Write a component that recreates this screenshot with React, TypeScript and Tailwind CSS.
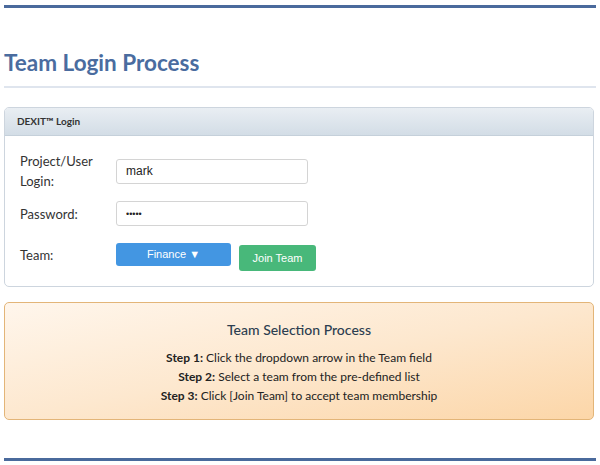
const LABEL = "text-[13px] text-[#333]";

const Field = ({ label, children }: { label: React.ReactNode; children: React.ReactNode }) => (
  <div className="flex items-center">
    <div className={`w-[96px] leading-[20px] ${LABEL}`}>{label}</div>
    {children}
  </div>
);

const App = () => {
  return (
    <div className="w-[600px] h-[465px] bg-white px-[4px] pt-[5px] font-['Lato',sans-serif] overflow-hidden">
      <div className="h-[3px] bg-[#4a6a9c]" />

      <h1 className="mt-[40px] text-[22.5px] leading-[30px] font-bold text-[#4a6c9f]">
        Team Login Process
      </h1>
      <div className="mt-[8px] h-[2px] bg-[#dfe5ee]" />

      <div className="mt-[19px] mr-[2px] rounded-[5px] border border-[#cdd5de] overflow-hidden">
        <div className="h-[28px] flex items-center px-[12px] bg-gradient-to-b from-[#e9eef3] to-[#d3dde6] border-b border-[#c5d0da] text-[10px] font-bold text-[#333]">
          DEXIT™ Login
        </div>
        <div className="px-[15px] pt-[15px] pb-[15px] flex flex-col gap-[10px]">
          <Field label={<>Project/User<br />Login:</>}>
            <input
              readOnly
              value="mark"
              className="w-[192px] h-[25px] rounded-[3px] border border-[#d4d4d4] px-[9px] text-[12px] text-[#222] font-['Liberation_Sans',sans-serif] outline-none"
            />
          </Field>
          <Field label="Password:">
            <input
              readOnly
              type="password"
              value="mark1"
              className="w-[192px] h-[25px] rounded-[3px] border border-[#d4d4d4] px-[9px] text-[9px] text-[#222] font-['Liberation_Sans',sans-serif] outline-none"
            />
          </Field>
          <div className="mt-[7px] flex items-start">
            <div className={`w-[96px] pt-[2px] leading-[20px] ${LABEL}`}>Team:</div>
            <button className="w-[115px] h-[23px] rounded-[3px] bg-[#4396e2] text-white text-[11px] font-['Liberation_Sans',sans-serif]">
              Finance ▼
            </button>
            <button className="ml-[8px] mt-[2px] w-[77px] h-[26px] rounded-[3px] bg-[#48b87a] text-white text-[11px] font-['Liberation_Sans',sans-serif]">
              Join Team
            </button>
          </div>
        </div>
      </div>

      <div className="mt-[15px] mr-[2px] h-[118px] rounded-[5px] border border-[#e3b578] bg-gradient-to-br from-[#fff6ec] via-[#fde8cf] to-[#fcd6a8] flex flex-col items-center pt-[17px]">
        <h2 className="text-[14px] leading-[20px] text-[#2c3e50] font-medium">Team Selection Process</h2>
        <div className="mt-[8px] text-[12px] leading-[19px] text-[#222] text-center">
          <p><b>Step 1:</b> Click the dropdown arrow in the Team field</p>
          <p><b>Step 2:</b> Select a team from the pre-defined list</p>
          <p><b>Step 3:</b> Click [Join Team] to accept team membership</p>
        </div>
      </div>

      <div className="mt-[38px] h-[3px] bg-[#4a6a9c]" />
    </div>
  );
};

export default App;
